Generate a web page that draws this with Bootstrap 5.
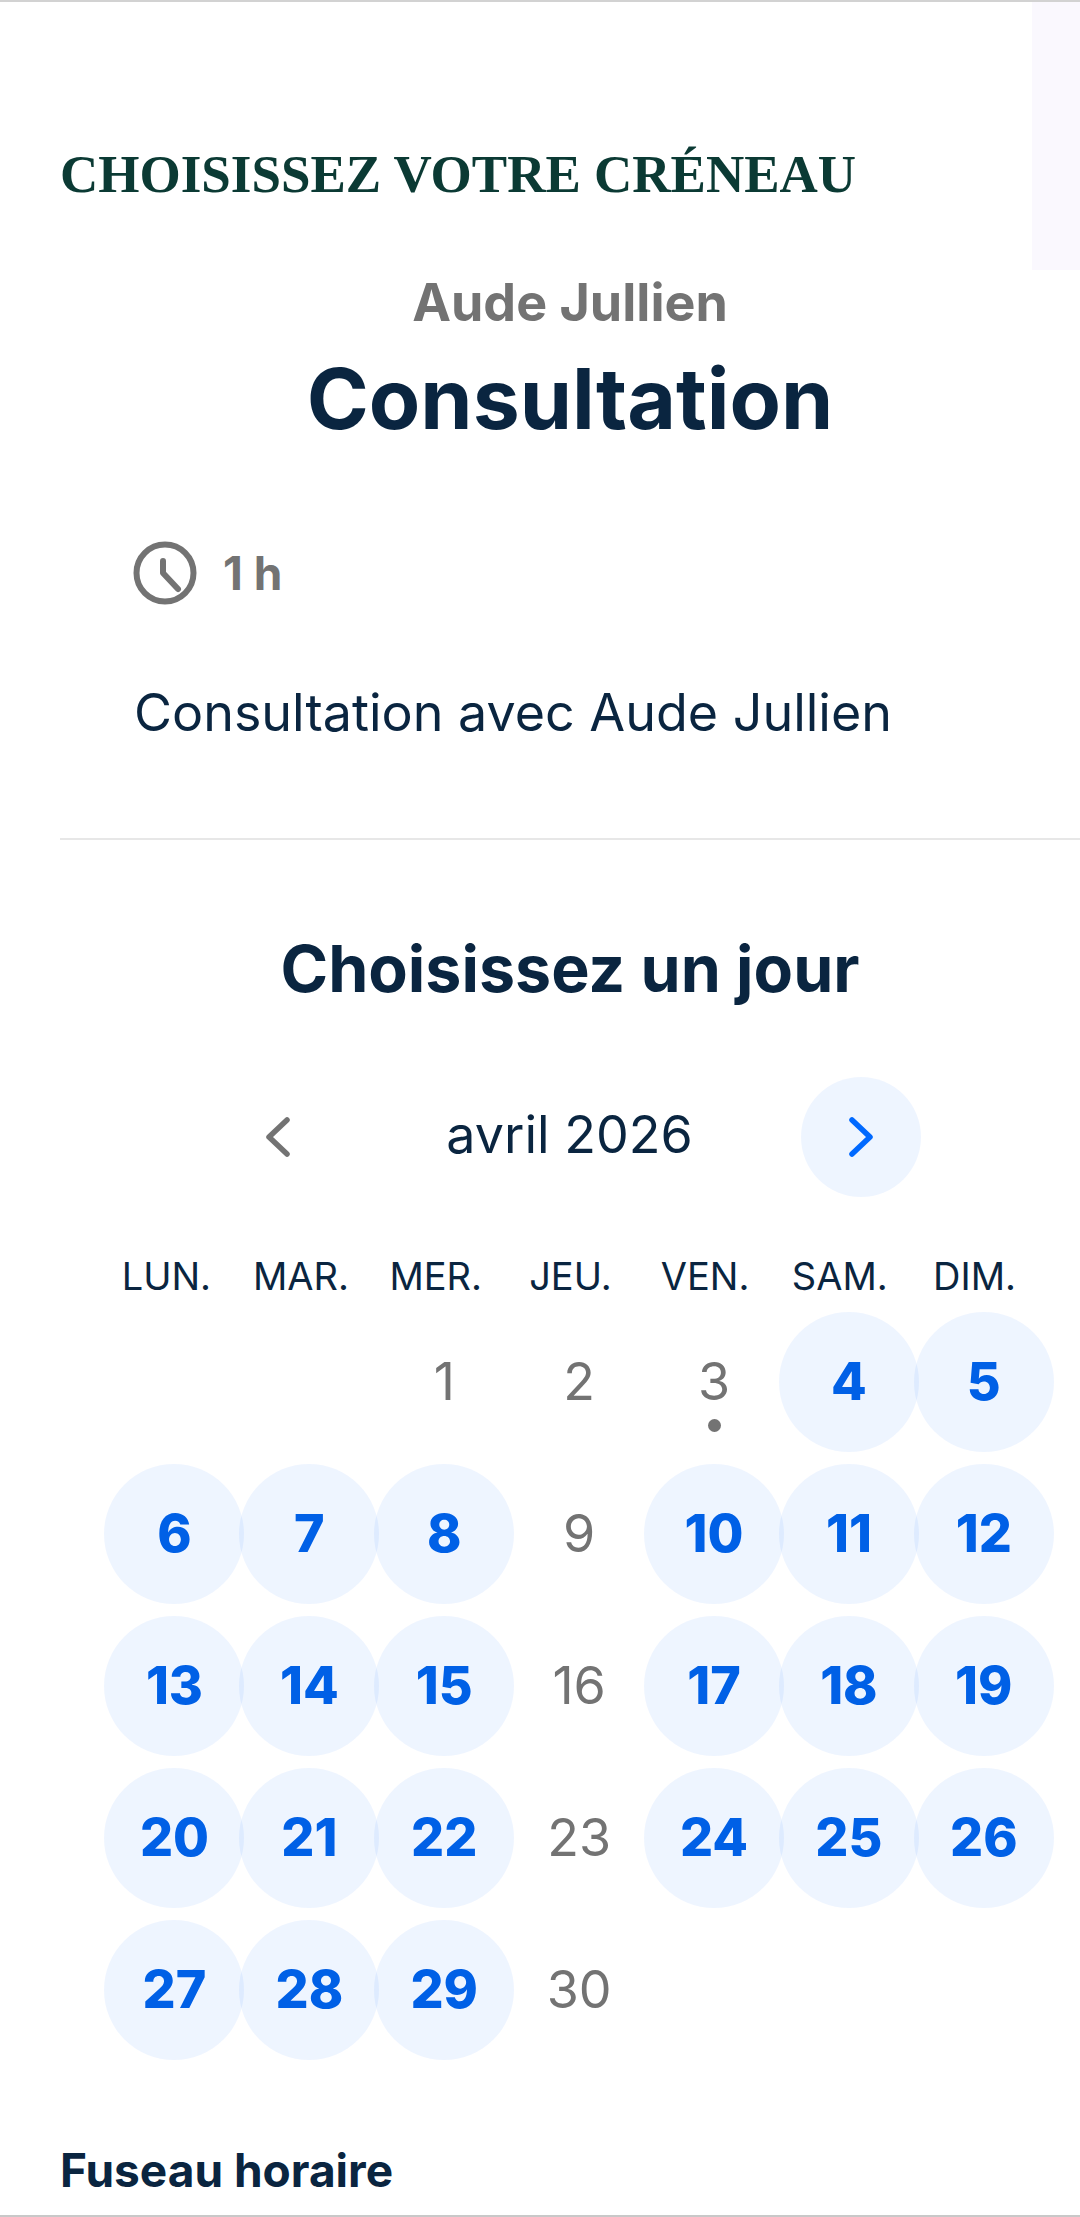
<!DOCTYPE html>
<html lang="fr"><head><meta charset="utf-8"><title>Choisissez votre créneau</title>
<link href="https://cdn.jsdelivr.net/npm/bootstrap@5.3.0/dist/css/bootstrap.min.css" rel="stylesheet">
<style>
html,body{height:2217px;overflow:hidden;background:#fff}
body{font-family:"Inter","Liberation Sans",sans-serif;color:#0a2540;position:relative;font-feature-settings:"liga" 0}
.edge-top{height:2px;background:#d2d2d2}
.edge-bot{position:absolute;left:0;right:0;bottom:0;height:2px;background:#c8c8c8}
.side-tint{position:absolute;top:2px;right:0;width:48px;height:268px;background:#faf8fe}
.page-title{margin:0;padding:146px 0 0 60px;height:268px;font-family:"Liberation Serif",serif;font-weight:700;font-size:53px;line-height:52px;letter-spacing:0;color:#0b3a34}
.host{font-size:52px;font-weight:700;line-height:60px;color:#737373;text-align:center;padding:3px 0 0 60px}
.evt{font-size:84px;font-weight:700;line-height:100px;text-align:center;margin:16px 0 0;padding-left:60px}
.dur{padding:92px 0 0 133px;gap:26px;font-size:46px;font-weight:700;color:#737373;line-height:64px}
.desc{font-size:52px;line-height:64px;padding:76px 0 0 134px;margin:0}
.rule{margin:93px 0 0 60px;height:2px;background:#e7e7e7;opacity:1;border:0}
.pick{font-size:64.5px;font-weight:700;line-height:72px;text-align:center;margin:93px 0 0;padding-left:60px}
.monthbar{margin-top:72px;height:120px;padding-left:218px;width:921px}
.navbtn{width:120px;height:120px;border-radius:50%;border:0;padding:0;background:transparent}
.navbtn.on{background:rgba(0,105,255,.065)}
.month{font-size:52px;line-height:60px;flex:1;text-align:center;padding-bottom:4px}
.week{display:grid;grid-template-columns:repeat(7,134.7px);margin:56px 0 0 99px;font-size:38px;line-height:46px;text-align:center}
.days{display:grid;grid-template-columns:repeat(7,134.9px);grid-auto-rows:152px;margin:7px 0 0 107px}
.dayc{display:flex;align-items:center;justify-content:center;position:relative;font-size:52px;color:#737373}
.dayc.open{font-weight:800;color:#0060e6}
.dayc.open::before{content:"";position:absolute;left:50%;top:50%;width:140px;height:140px;margin:-70px 0 0 -70px;border-radius:50%;background:rgba(0,105,255,.065)}
.dayc span{position:relative}
.today::after{content:"";position:absolute;left:50%;top:50%;width:13px;height:13px;margin:37px 0 0 -6.5px;border-radius:50%;background:#737373}
.tz{font-size:46px;font-weight:700;line-height:52px;margin:78px 0 0 60px}
</style></head><body>
<div class="edge-top"></div>
<div class="side-tint"></div>
<h1 class="page-title">CHOISISSEZ VOTRE CRÉNEAU</h1>
<div class="host">Aude Jullien</div>
<h2 class="evt">Consultation</h2>
<div class="dur d-flex align-items-center">
<svg width="64" height="64" viewBox="0 0 64 64" fill="none" stroke="#737373" stroke-width="6" stroke-linecap="round" stroke-linejoin="round"><circle cx="32" cy="32" r="28.5"/><path d="M30 20v12l15 16"/></svg>
<span>1 h</span></div>
<p class="desc">Consultation avec Aude Jullien</p>
<hr class="rule">
<h3 class="pick">Choisissez un jour</h3>
<div class="monthbar d-flex align-items-center">
<button class="navbtn" aria-label="Mois précédent"><svg width="34" height="44" viewBox="0 0 34 44" fill="none" stroke="#737373" stroke-width="5.5" stroke-linecap="round" stroke-linejoin="round"><path d="M26 5 8 22l18 17"/></svg></button>
<div class="month">avril 2026</div>
<button class="navbtn on" aria-label="Mois suivant"><svg width="34" height="44" viewBox="0 0 34 44" fill="none" stroke="#0069ff" stroke-width="5.5" stroke-linecap="round" stroke-linejoin="round"><path d="m8 5 18 17L8 39"/></svg></button>
</div>
<div class="week"><div>LUN.</div><div>MAR.</div><div>MER.</div><div>JEU.</div><div>VEN.</div><div>SAM.</div><div>DIM.</div></div>
<div class="days">
<div></div><div></div>
<div class="dayc"><span>1</span></div><div class="dayc"><span>2</span></div><div class="dayc today"><span>3</span></div><div class="dayc open"><span>4</span></div><div class="dayc open"><span>5</span></div>
<div class="dayc open"><span>6</span></div><div class="dayc open"><span>7</span></div><div class="dayc open"><span>8</span></div><div class="dayc"><span>9</span></div><div class="dayc open"><span>10</span></div><div class="dayc open"><span>11</span></div><div class="dayc open"><span>12</span></div>
<div class="dayc open"><span>13</span></div><div class="dayc open"><span>14</span></div><div class="dayc open"><span>15</span></div><div class="dayc"><span>16</span></div><div class="dayc open"><span>17</span></div><div class="dayc open"><span>18</span></div><div class="dayc open"><span>19</span></div>
<div class="dayc open"><span>20</span></div><div class="dayc open"><span>21</span></div><div class="dayc open"><span>22</span></div><div class="dayc"><span>23</span></div><div class="dayc open"><span>24</span></div><div class="dayc open"><span>25</span></div><div class="dayc open"><span>26</span></div>
<div class="dayc open"><span>27</span></div><div class="dayc open"><span>28</span></div><div class="dayc open"><span>29</span></div><div class="dayc"><span>30</span></div>
</div>
<div class="tz">Fuseau horaire</div>
<div class="edge-bot"></div>
</body></html>
